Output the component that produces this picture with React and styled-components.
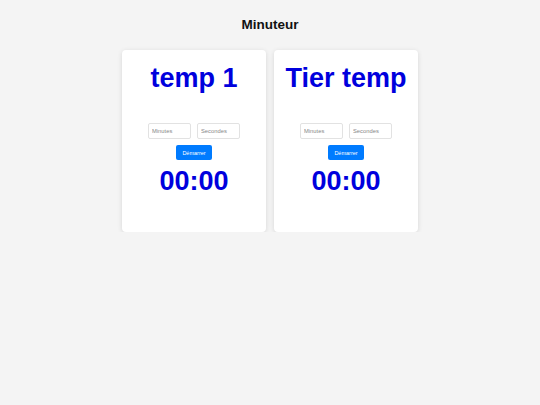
import React from "react";
import styled, { createGlobalStyle } from "styled-components";

const Global = createGlobalStyle`
  html, body { margin: 0; padding: 0; background: #f4f4f4; }
  body { font-family: "Liberation Sans", Arial, sans-serif; }
`;

const Page = styled.div`
  display: flex;
  flex-direction: column;
  align-items: center;
  padding-top: 17px;
`;

const Title = styled.h1`
  margin: 0;
  font-size: 13.5px;
  line-height: 16px;
  font-weight: bold;
  color: #111;
`;

const Cards = styled.div`
  display: flex;
  gap: 8px;
  margin-top: 17px;
`;

const Card = styled.div`
  width: 144px;
  height: 182px;
  box-sizing: border-box;
  background: #fff;
  border-radius: 4px;
  box-shadow: 0 1px 5px rgba(0, 0, 0, 0.12);
  padding-top: 12px;
  display: flex;
  flex-direction: column;
  align-items: center;
`;

const Heading = styled.h2`
  margin: 0;
  font-size: 27px;
  line-height: 32px;
  font-weight: bold;
  color: #0000dd;
  white-space: nowrap;
`;

const Inputs = styled.div`
  display: flex;
  gap: 6px;
  margin-top: 29px;
`;

const Field = styled.input`
  width: 43px;
  height: 16px;
  box-sizing: border-box;
  border: 1px solid #e2e2e2;
  border-radius: 2px;
  padding: 0 3px;
  font-family: "Liberation Sans", Arial, sans-serif;
  font-size: 5.8px;
  outline: none;
  &::placeholder { color: #888; }
`;

const Button = styled.button`
  margin-top: 6px;
  width: 36px;
  height: 15px;
  padding: 0;
  border: none;
  border-radius: 2px;
  background: #007bff;
  color: #fff;
  font-family: "Liberation Sans", Arial, sans-serif;
  font-size: 5.5px;
`;

const Time = styled.div`
  margin-top: 5px;
  font-size: 27px;
  line-height: 32px;
  font-weight: bold;
  color: #0000dd;
`;

function Timer({ name }) {
  return (
    <Card>
      <Heading>{name}</Heading>
      <Inputs>
        <Field placeholder="Minutes" />
        <Field placeholder="Secondes" />
      </Inputs>
      <Button>Démarrer</Button>
      <Time>00:00</Time>
    </Card>
  );
}

export default function App() {
  return (
    <>
      <Global />
      <Page>
        <Title>Minuteur</Title>
        <Cards>
          <Timer name="temp 1" />
          <Timer name="Tier temp" />
        </Cards>
      </Page>
    </>
  );
}
